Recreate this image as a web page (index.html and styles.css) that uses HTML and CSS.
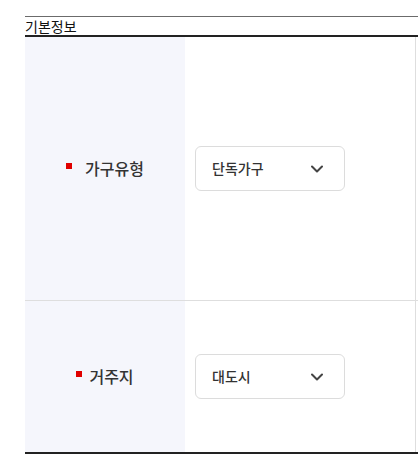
FILE: index.html
```html
<!DOCTYPE html>
<html lang="ko">
<head>
<meta charset="utf-8">
<link rel="stylesheet" href="styles.css">
</head>
<body>
<div class="wrap">
  <div class="board">
    <div class="title">기본정보</div>
    <div class="row row-1">
      <div class="th"><span class="req"></span><span class="label label-wide">가구유형</span></div>
      <div class="td">
        <div class="select"><span class="value">단독가구</span>
          <svg class="chev" width="12" height="8" viewBox="0 0 12 8"><polyline points="1,1.5 6,6.5 11,1.5" fill="none" stroke="#444" stroke-width="2" stroke-linecap="round" stroke-linejoin="round"/></svg>
        </div>
      </div>
      <div class="extra"></div>
    </div>
    <div class="row row-2">
      <div class="th"><span class="req"></span><span class="label">거주지</span></div>
      <div class="td">
        <div class="select"><span class="value">대도시</span>
          <svg class="chev" width="12" height="8" viewBox="0 0 12 8"><polyline points="1,1.5 6,6.5 11,1.5" fill="none" stroke="#444" stroke-width="2" stroke-linecap="round" stroke-linejoin="round"/></svg>
        </div>
      </div>
      <div class="extra"></div>
    </div>
  </div>
</div>
</body>
</html>
```

FILE: styles.css
```css
html, body {
  margin: 0;
  padding: 0;
  background: #fff;
}
body {
  font-family: "Noto Sans CJK KR", "Noto Sans", sans-serif;
  color: #111;
}
.wrap {
  padding: 16px 0 0 25px;
  overflow: hidden;
  width: 393px;
}
.board {
  width: 520px;
}
.title {
  border-top: 1px solid #6b6b6b;
  border-bottom: 2px solid #222;
  font-size: 14px;
  line-height: 18px;
  color: #111;
}
.row {
  display: flex;
  border-bottom: 1px solid #dedede;
}
.row-1 { height: 263px; }
.row-2 {
  height: 151px;
  border-bottom: 2px solid #222;
}
.th {
  width: 160px;
  flex: none;
  background: #f5f6fc;
  display: flex;
  align-items: center;
  justify-content: center;
}
.req {
  width: 6px;
  height: 6px;
  background: #e00000;
  margin-right: 7px;
  margin-top: -5px;
}
.label {
  font-size: 16px;
  font-weight: 500;
  color: #333;
  line-height: 20px;
  margin-top: -2px;
}
.label-wide {
  margin-left: 6px;
}
.td {
  width: 230px;
  flex: none;
  box-sizing: border-box;
  padding-left: 10px;
  display: flex;
  align-items: center;
}
.select {
  width: 150px;
  height: 45px;
  box-sizing: border-box;
  border: 1px solid #dcdcdc;
  border-radius: 6px;
  display: flex;
  align-items: center;
  justify-content: space-between;
  padding: 0 21px 0 16px;
}
.value {
  font-size: 14px;
  font-weight: 500;
  color: #333;
  margin-top: -1px;
}
.chev {
  display: block;
}
.extra {
  flex: 1;
  border-left: 1px solid #dedede;
}
```
